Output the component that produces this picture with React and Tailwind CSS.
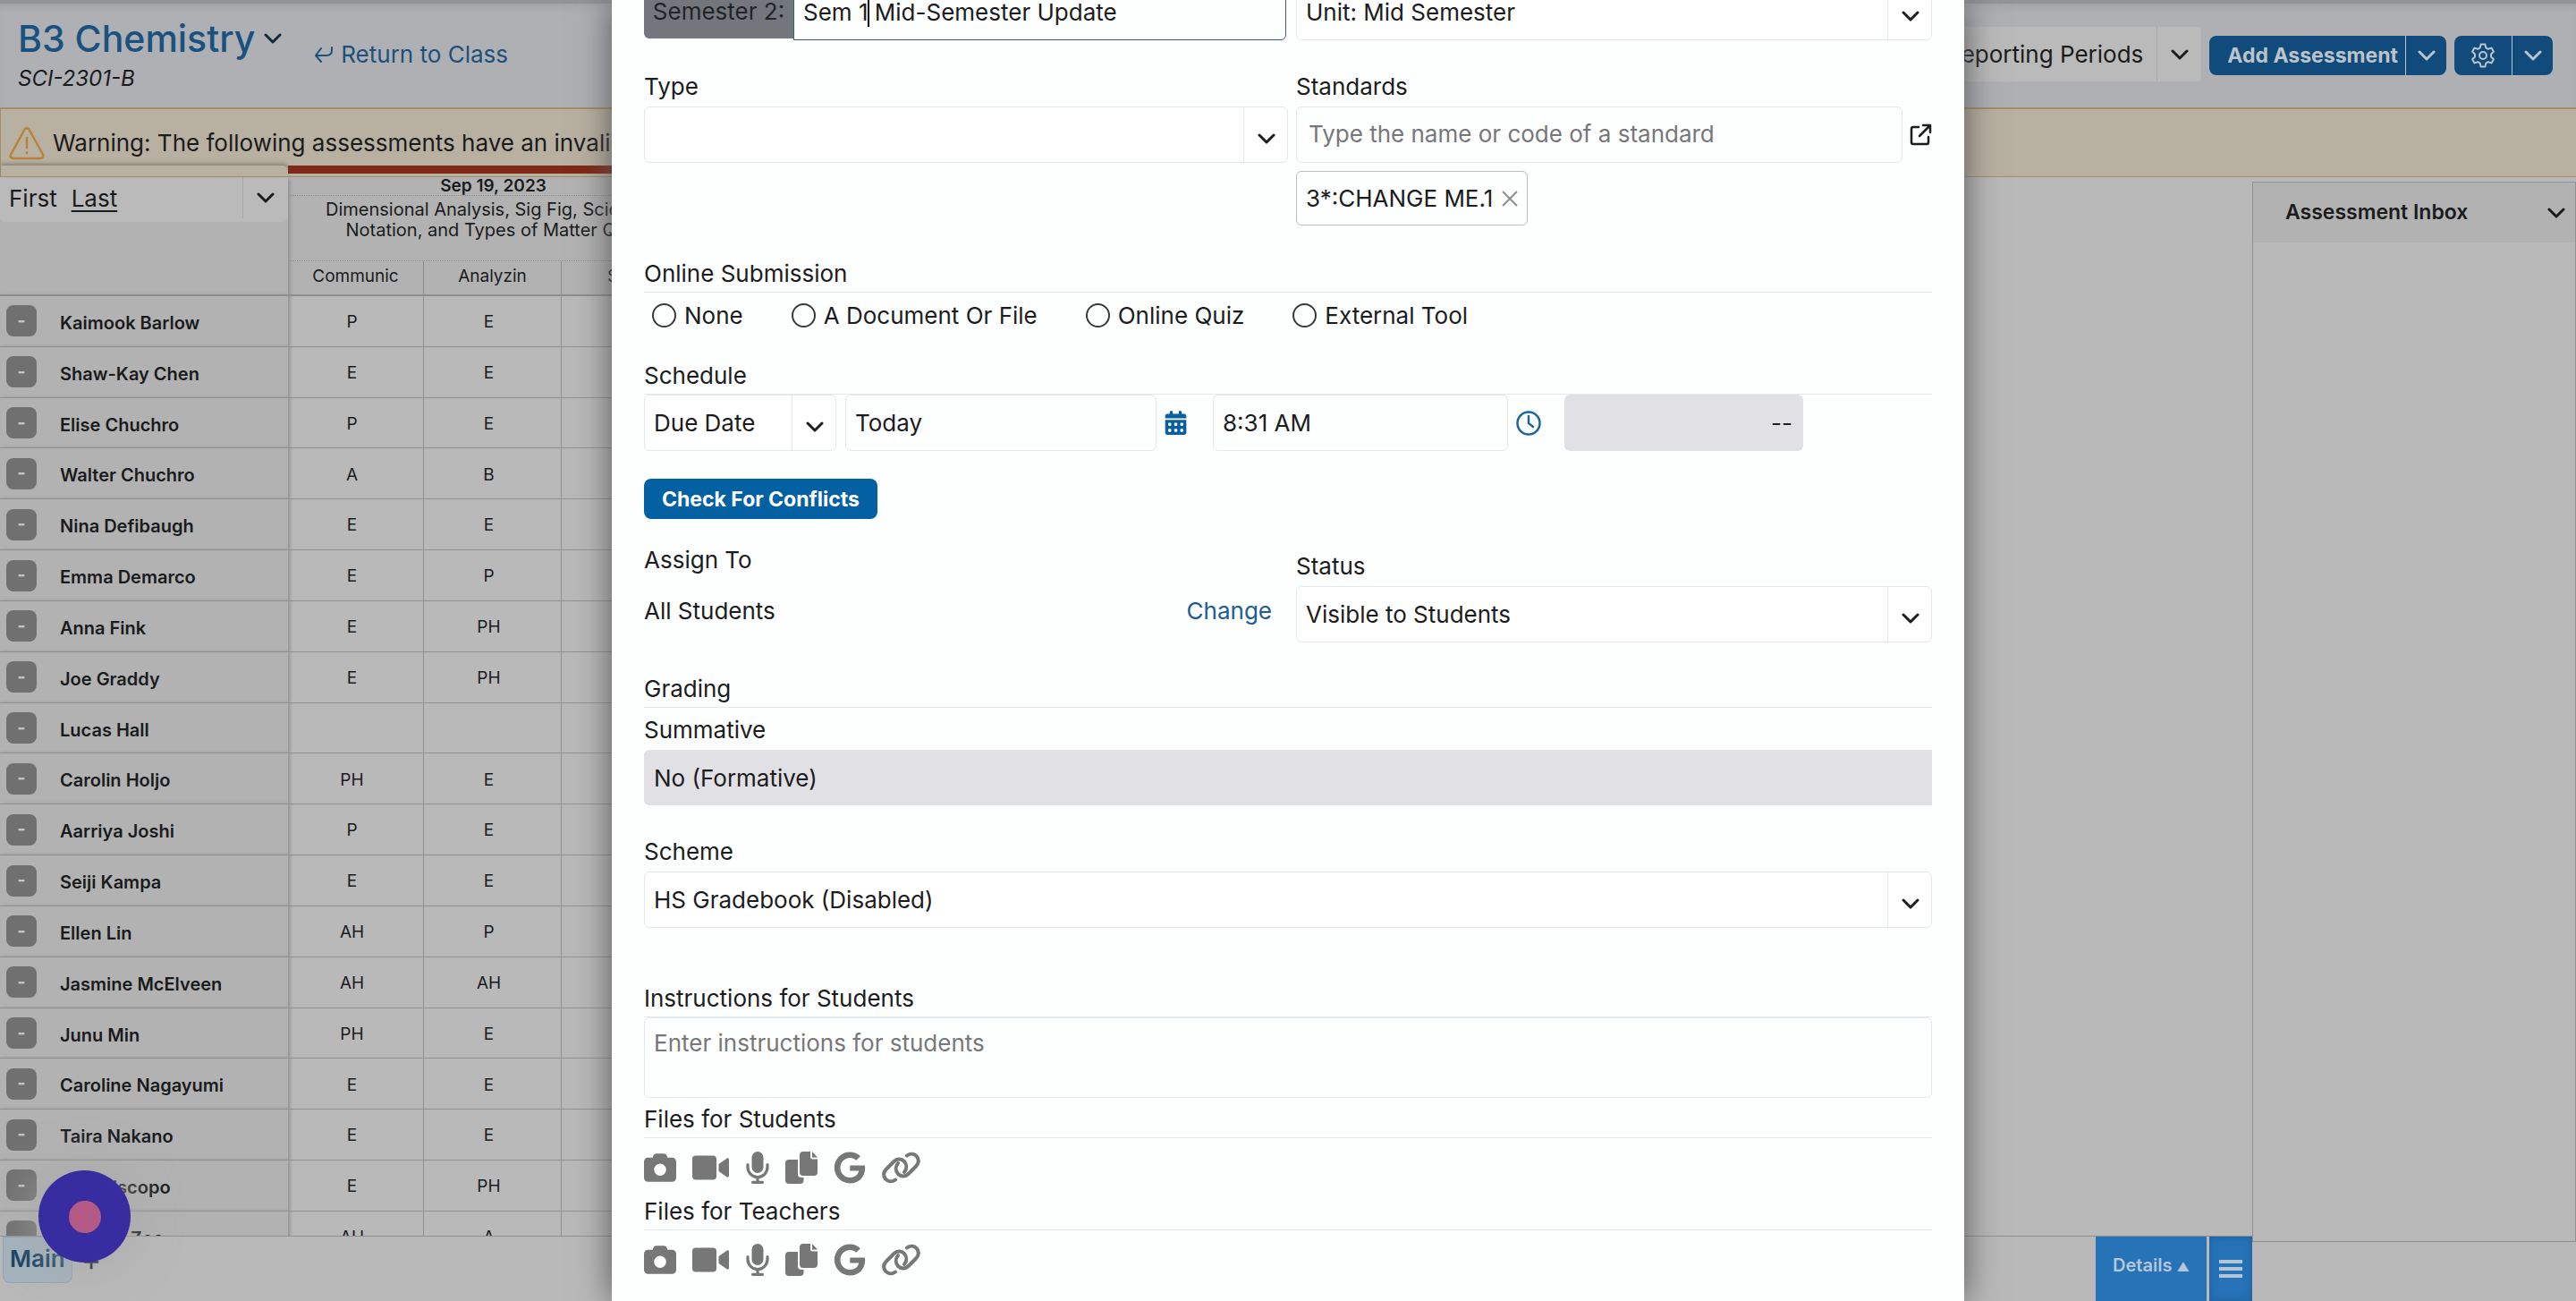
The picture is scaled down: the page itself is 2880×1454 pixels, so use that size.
import { useState } from "react";
import { FaCamera, FaGoogle, FaCalendarDays } from "react-icons/fa6";

const students = [
  ["Kaimook Barlow", "P", "E"],
  ["Shaw-Kay Chen", "E", "E"],
  ["Elise Chuchro", "P", "E"],
  ["Walter Chuchro", "A", "B"],
  ["Nina Defibaugh", "E", "E"],
  ["Emma Demarco", "E", "P"],
  ["Anna Fink", "E", "PH"],
  ["Joe Graddy", "E", "PH"],
  ["Lucas Hall", "", ""],
  ["Carolin Holjo", "PH", "E"],
  ["Aarriya Joshi", "P", "E"],
  ["Seiji Kampa", "E", "E"],
  ["Ellen Lin", "AH", "P"],
  ["Jasmine McElveen", "AH", "AH"],
  ["Junu Min", "PH", "E"],
  ["Caroline Nagayumi", "E", "E"],
  ["Taira Nakano", "E", "E"],
  ["Ian Episcopo", "E", "PH"],
  ["Natalya Zoe", "AH", "A"],
];

const submissionTypes = ["None", "A Document Or File", "Online Quiz", "External Tool"];

function VideoIcon({ className }) {
  return (
    <svg viewBox="0 0 42 36" fill="currentColor" className={className}>
      <rect x="0" y="4.500" width="27" height="27" rx="4" />
      <path d="M29.500 14l9-6.300c1.200-.8 2.500-.1 2.500 1.200v18.200c0 1.300-1.300 2-2.500 1.200l-9-6.300z" />
    </svg>
  );
}

function MicIcon({ className }) {
  return (
    <svg viewBox="0 0 26 36" fill="none" stroke="currentColor" strokeWidth="3.200" strokeLinecap="round" className={className}>
      <rect x="6.500" y="0" width="13" height="24" rx="6.500" fill="currentColor" stroke="none" />
      <path d="M2 14.500v3a11 11 0 0 0 22 0v-3M13 29v5M7.500 34.300h11" />
    </svg>
  );
}

function CopyIcon({ className }) {
  return (
    <svg viewBox="0 0 36 36" fill="currentColor" className={className}>
      <path d="M4 9h10v16a4 4 0 0 0 4 4h2.500v3a4 4 0 0 1-4 4H4a4 4 0 0 1-4-4V13a4 4 0 0 1 4-4z" />
      <path d="M20 0h8v6a2.500 2.500 0 0 0 2.500 2.500H36V23a4 4 0 0 1-4 4H20a4 4 0 0 1-4-4V4a4 4 0 0 1 4-4z" />
      <path d="M30 0l6 6.500h-6z" />
    </svg>
  );
}

function LinkIcon({ className }) {
  return (
    <svg viewBox="0 0 43 36" fill="none" stroke="currentColor" strokeWidth="4" strokeLinecap="round" className={className}>
      <path d="M15 31.500C11 34.500 6.500 33.500 4 30.500 1.500 27 1.500 23 5 19.500L13.500 11C17 7.500 22 8 25 11c3 3.500 3 8.500 0 12" />
      <path d="M28 4.500C32 1.500 36.500 2.500 39 5.500c2.500 3.500 2.500 7.500-1 11L29.500 25C26 28.500 21 28 18 25c-3-3.500-3-8.500 0-12" />
    </svg>
  );
}

const fileActions = [
  ["Camera", FaCamera],
  ["Video", VideoIcon],
  ["Microphone", MicIcon],
  ["Copy file", CopyIcon],
  ["Google Drive", FaGoogle],
  ["Link", LinkIcon],
];

function Chevron({ className = "w-5" }) {
  return (
    <svg viewBox="0 0 20 12" fill="none" stroke="currentColor" strokeWidth="3" strokeLinecap="round" strokeLinejoin="round" className={className}>
      <path d="M2 2l8 8 8-8" />
    </svg>
  );
}

function Select({ id, label, options }) {
  return (
    <div className="relative">
      <select id={id} aria-label={label} className="block h-[63px] w-full appearance-none rounded-md border border-[#e3e8ea] bg-white pr-14 pl-[10px]">
        {options.map((o) => <option key={o}>{o}</option>)}
      </select>
      <div className="pointer-events-none absolute inset-y-0 right-0 flex w-[50px] items-center justify-center border-l border-[#e3e8ea] pt-2">
        <Chevron />
      </div>
    </div>
  );
}

function SectionTitle({ children, className = "" }) {
  return <h3 className={`border-b border-[#e3e8ea] pb-1 ${className}`}>{children}</h3>;
}

function FileRow() {
  return (
    <div className="flex h-[66px] items-center gap-[18px] text-[#777]">
      {fileActions.map(([name, Icon]) => (
        <button key={name} type="button" aria-label={name}>
          <Icon className="h-9 w-auto" />
        </button>
      ))}
    </div>
  );
}

function TopBar() {
  return (
    <header className="flex h-[120px] shrink-0 items-start justify-between border-t-4 border-[#919396] bg-[#aeb0b4] shadow-[inset_0_8px_8px_-4px_#a2a4a8]">
      <div className="flex">
        <div className="pt-3 pl-5">
          <button className="flex items-center gap-[10px] text-[41px] leading-[54px] font-medium text-[#19527f]">
            B3 Chemistry
            <Chevron className="w-5 text-[#10293d]" />
          </button>
          <p className="text-2xl leading-9 italic">SCI-2301-B</p>
        </div>
        <a href="#class" className="ml-9 flex items-center gap-2 self-start pt-[37px] text-[#1d507a]">
          <svg viewBox="0 0 22 20" fill="none" stroke="currentColor" strokeWidth="2" strokeLinecap="round" strokeLinejoin="round" className="w-[22px]">
            <path d="M20 2v3c0 4-2 6-6 6H2M8 3l-6 8 6 7" />
          </svg>
          Return to Class
        </a>
      </div>
      <div className="flex gap-[9px] pt-[26px] pr-[26px]">
        <button className="flex h-[61px] items-center rounded bg-[#bababa]">
          <span className="px-[15px]">All Reporting Periods</span>
          <span className="flex h-full w-[50px] items-center justify-center border-l border-[#a4a8aa]">
            <Chevron />
          </span>
        </button>
        <div className="flex gap-[9px] pt-[10px]">
          <div className="flex h-11 rounded-lg bg-[#114b7c] text-[#bcc3c9]">
            <button className="pr-2 pl-5 text-[23px] font-bold">Add Assessment</button>
            <button aria-label="More add options" className="flex w-[46px] items-center justify-center border-l border-[#bcc3c9]">
              <Chevron />
            </button>
          </div>
          <div className="flex h-11 rounded-lg bg-[#114b7c] text-[#bcc3c9]">
            <button aria-label="Settings" className="flex w-16 items-center justify-center">
              <svg viewBox="0 0 28 28" fill="none" stroke="currentColor" strokeWidth="2" strokeLinejoin="round" className="w-7">
                <path d="M11.600 1.500h4.800l.9 3.900 2.400 1.400 3.800-1.200 2.400 4.200-2.900 2.700v3l2.900 2.700-2.400 4.200-3.800-1.200-2.400 1.400-.9 3.900h-4.800l-.9-3.900-2.400-1.400-3.800 1.200-2.400-4.200 2.900-2.700v-3L2.100 9.800l2.400-4.200 3.800 1.200 2.400-1.400z" />
                <circle cx="14" cy="14" r="4" />
              </svg>
            </button>
            <button aria-label="More settings" className="flex w-[46px] items-center justify-center border-l border-[#bcc3c9]">
              <Chevron />
            </button>
          </div>
        </div>
      </div>
    </header>
  );
}

function Warning() {
  return (
    <div className="relative flex h-[78px] shrink-0 items-center gap-2 border-t-2 border-b border-l border-[#a38c69] bg-[#b8b0a0] pl-2">
      <svg viewBox="0 0 42 38" fill="none" stroke="#b98238" strokeWidth="2.500" strokeLinecap="round" strokeLinejoin="round" className="w-[42px]">
        <path d="M18.500 3.500a3 3 0 0 1 5 0l15 27.500a3 3 0 0 1-2.500 5H6a3 3 0 0 1-2.500-5z" />
        <path d="M21 13v11M21 29.500v.5" />
      </svg>
      <p className="text-[26px] leading-8">Warning: The following assessments have an invalid date</p>
      <div className="absolute bottom-0 left-0 h-3 w-[321px] rounded-tr-md shadow-[0_-2px_4px_#857f75]" />
      <div className="absolute bottom-[3px] left-[321px] h-[9px] w-[459px] bg-[#7e2817]" />
    </div>
  );
}

function Gradebook() {
  return (
    <table className="h-[1213px] w-[781px] table-fixed border-separate border-spacing-0 text-[19px]">
      <colgroup>
        <col className="w-[322px]" />
        <col className="w-[152px]" />
        <col className="w-[154px]" />
        <col className="w-[153px]" />
      </colgroup>
      <thead className="bg-[#b2b2b2]">
        <tr className="h-[21px]">
          <th rowSpan={3} className="border-b-2 border-[#8d8d8f] p-0 align-top shadow-[2px_2px_4px_#8d8d93]">
            <button className="flex h-[50px] w-full items-center rounded-b-md bg-[#bababa] pb-1 text-[26px] font-normal">
              <span className="flex flex-1 gap-4 pl-[10px]">First <u className="underline-offset-4">Last</u></span>
              <span className="flex h-full w-[51px] items-center justify-center border-l border-[#a4a8aa]">
                <Chevron />
              </span>
            </button>
          </th>
          <th colSpan={3} className="border-b border-dotted border-[#8d8d8f] p-0 leading-5 font-semibold">Sep 19, 2023</th>
        </tr>
        <tr className="h-[73px]">
          <td colSpan={3} className="border-b border-dotted border-[#8d8d8f] px-8 pt-1 pb-0 text-center align-top text-xl leading-[23px]">
            Dimensional Analysis, Sig Fig, Scientific<br />Notation, and Types of Matter Quiz
          </td>
        </tr>
        <tr className="h-[39px]">
          {["Communic", "Analyzin", "Scien"].map((c) => (
            <th key={c} className="border-r border-b-2 border-[#8d8d8f] p-0 pb-[2px] font-normal">{c}</th>
          ))}
        </tr>
      </thead>
      <tbody>
        {students.map(([name, ...marks]) => (
          <tr key={name}>
            <th scope="row" className="border-b border-[#919193] bg-[#b2b2b2] p-0 text-left text-xl font-semibold shadow-[2px_0_4px_#8d8d93]">
              <div className="flex items-center gap-[26px] pl-[7px]">
                <button aria-label={`Toggle ${name}`} className="flex h-[35px] w-[34px] items-center justify-center rounded-lg bg-[#707070] pb-[2px] text-xl leading-none font-bold text-[#c4c4c4]">-</button>
                <span className="pt-1">{name}</span>
              </div>
            </th>
            <td className="border-r border-b border-[#919193] p-0 pt-[3px] pr-2 text-center">{marks[0]}</td>
            <td className="border-r border-b border-[#919193] p-0 pt-[3px] pr-2 text-center">{marks[1]}</td>
            <td className="border-r border-b border-[#919193] p-0"></td>
          </tr>
        ))}
      </tbody>
    </table>
  );
}

function AssessmentForm() {
  const [title, setTitle] = useState("Sem 1 Mid-Semester Update");
  const [submission, setSubmission] = useState("");

  return (
    <form className="-mt-[18px] px-9 text-[26px] leading-8 text-[#1c1c1e]">
      <div className="grid grid-cols-[50%_1fr] gap-x-[9px]">
        <div className="relative flex pr-[2px]">
          <label htmlFor="title" className="flex h-[61px] w-[167px] items-center justify-center rounded-l-md bg-[#73767c] text-[#222429]">Semester 2:</label>
          <input id="title" value={title} onChange={(e) => setTitle(e.target.value)} className="h-[63px] min-w-0 flex-1 rounded-r-md border border-[#3c5c7c] pl-[10px] outline-none" />
          <span className="absolute top-4 left-[250px] h-8 w-[2px] bg-black" />
        </div>
        <Select label="Unit" options={["Unit: Mid Semester"]} />
      </div>

      <div className="mt-9 grid grid-cols-[50%_1fr] gap-x-[9px]">
        <div>
          <label htmlFor="type" className="mb-[6px] block">Type</label>
          <Select id="type" options={[""]} />
        </div>
        <div>
          <label htmlFor="standards" className="mb-[6px] block">Standards</label>
          <div className="flex items-center gap-2">
            <input id="standards" placeholder="Type the name or code of a standard" className="h-[63px] min-w-0 flex-1 rounded-md border border-[#e3e8ea] pb-[2px] pl-[13px] placeholder:text-[#77777a]" />
            <button type="button" aria-label="Browse standards">
              <svg viewBox="0 0 25 25" fill="none" stroke="currentColor" strokeWidth="2.500" strokeLinecap="round" strokeLinejoin="round" className="w-[25px]">
                <path d="M10 4H4a2 2 0 0 0-2 2v15a2 2 0 0 0 2 2h15a2 2 0 0 0 2-2v-6M15 2h8v8M23 2L11 14" />
              </svg>
            </button>
          </div>
          <div className="mt-[9px] flex h-[61px] w-fit items-center gap-[10px] rounded-md border border-[#bdbdbf] px-[10px]">
            3*:CHANGE ME.1
            <button type="button" aria-label="Remove standard" className="text-[#8e8e93]">
              <svg viewBox="0 0 18 18" stroke="currentColor" strokeWidth="2" className="w-[18px]">
                <path d="M1 1l16 16M17 1L1 17" />
              </svg>
            </button>
          </div>
        </div>
      </div>

      <SectionTitle className="mt-[38px]">Online Submission</SectionTitle>
      <div className="flex h-[51px] items-center gap-[54px] pl-[9px]">
        {submissionTypes.map((t) => (
          <label key={t} className="flex items-center gap-[9px]">
            <input
              type="radio"
              name="submission"
              checked={submission === t}
              onChange={() => setSubmission(t)}
              className="size-[27px] appearance-none rounded-full border-2 border-[#3a3a3c] checked:bg-[#0361a3]"
            />
            {t}
          </label>
        ))}
      </div>

      <SectionTitle className="mt-[26px]">Schedule</SectionTitle>
      <div className="flex items-center">
        <div className="w-[215px]">
          <Select label="Date type" options={["Due Date"]} />
        </div>
        <input aria-label="Due date" defaultValue="Today" className="ml-[10px] h-[63px] w-[348px] rounded-md border border-[#e3e8ea] pl-[10px]" />
        <button type="button" aria-label="Pick date" className="ml-2 text-[#0b5fa0]">
          <FaCalendarDays className="h-[27px] w-auto" />
        </button>
        <input aria-label="Due time" defaultValue="8:31 AM" className="ml-[28px] h-[63px] w-[330px] rounded-md border border-[#e3e8ea] pl-[10px]" />
        <button type="button" aria-label="Pick time" className="ml-[9px] text-[#1f659c]">
          <svg viewBox="0 0 28 28" fill="none" stroke="currentColor" strokeWidth="2.500" strokeLinecap="round" className="w-7">
            <circle cx="14" cy="14" r="12.500" />
            <path d="M14 6v8l5 4" />
          </svg>
        </button>
        <input aria-label="Duration" readOnly defaultValue="--" className="ml-[26px] h-[63px] w-[267px] rounded-md bg-[#e1e0e5] pr-3 text-right" />
      </div>
      <button type="button" className="mt-[31px] block h-[45px] rounded-lg bg-[#0361a3] px-5 text-[23px] font-bold text-white">Check For Conflicts</button>

      <div className="mt-[30px] grid grid-cols-[50%_1fr] gap-x-[9px]">
        <div>
          <h3>Assign To</h3>
          <div className="mt-[25px] flex justify-between pr-[18px]">
            <span>All Students</span>
            <a href="#assign" className="text-[#1d5c96]">Change</a>
          </div>
        </div>
        <div className="pt-[7px]">
          <label htmlFor="status" className="mb-[6px] block">Status</label>
          <Select id="status" options={["Visible to Students"]} />
        </div>
      </div>

      <SectionTitle className="mt-9">Grading</SectionTitle>
      <label htmlFor="summative" className="mt-[9px] mb-[6px] block">Summative</label>
      <input id="summative" readOnly defaultValue="No (Formative)" className="block h-[62px] w-full rounded-l-md bg-[#e1e0e5] pl-[11px]" />
      <label htmlFor="scheme" className="mt-9 mb-[6px] block">Scheme</label>
      <Select id="scheme" options={["HS Gradebook (Disabled)"]} />

      <label htmlFor="instructions" className="mt-[63px] block border-b border-[#dfe8ec] pb-1">Instructions for Students</label>
      <textarea id="instructions" placeholder="Enter instructions for students" className="block h-[90px] w-full resize-none rounded-md border border-[#e3e8ea] px-[10px] py-3 placeholder:text-[#77777a]" />

      <SectionTitle className="mt-2">Files for Students</SectionTitle>
      <FileRow />
      <SectionTitle>Files for Teachers</SectionTitle>
      <FileRow />
    </form>
  );
}

export default function App() {
  return (
    <div className="relative flex h-screen flex-col overflow-hidden bg-[#b9b9b9] font-['Inter',sans-serif] text-[26px] text-[#1a1b1d]">
      <TopBar />
      <Warning />
      <div className="flex min-h-0 flex-1">
        <main className="flex min-w-0 flex-1 flex-col">
          <div className="min-h-0 flex-1 overflow-hidden">
            <Gradebook />
          </div>
          <footer className="flex h-[73px] shrink-0 justify-between border-t border-[#8f8f8f]">
            <div className="flex items-start pl-[3px]">
              <button className="h-[52px] rounded-b-lg border border-[#8ea5b3] bg-[#a3b2bc] px-[7px] pb-1 font-semibold text-[#143f61]">Main</button>
              <button aria-label="Add tab" className="ml-[10px] text-[34px]">+</button>
            </div>
            <div className="flex gap-[3px]">
              <button className="w-[124px] bg-[#2673b8] pb-2 text-xl font-semibold text-[#b4c6d8]">Details <span className="text-sm">▲</span></button>
              <button aria-label="Menu" className="flex w-12 items-center justify-center bg-[#2673b8] text-[#b4c6d8] shadow-[inset_0_0_10px_#1f5f9c]">
                <svg viewBox="0 0 26 22" fill="currentColor" className="w-[26px]">
                  <path d="M0 1h26v4H0zM0 9h26v4H0zM0 17h26v4H0z" />
                </svg>
              </button>
            </div>
          </footer>
        </main>
        <aside className="mt-[5px] mb-[66px] w-[362px] border border-[#8f9294]">
          <h2 className="flex h-[67px] items-center justify-between bg-[#b2b2b2] pr-[11px] pl-9 text-[23px] font-semibold">
            Assessment Inbox
            <Chevron />
          </h2>
        </aside>
      </div>

      <div className="absolute inset-0 flex justify-center">
        <div role="dialog" aria-label="Edit assessment" className="w-[52.5%] overflow-hidden bg-[#fdfefe] shadow-[0_0_36px_#555]">
          <AssessmentForm />
        </div>
      </div>

      <button aria-label="Record" className="absolute bottom-[43px] left-[43px] flex size-[103px] items-center justify-center rounded-full bg-[#382da0] shadow-[0_0_60px_#a8a8a8]">
        <span className="size-9 rounded-full bg-[#b55a87]" />
      </button>
    </div>
  );
}
